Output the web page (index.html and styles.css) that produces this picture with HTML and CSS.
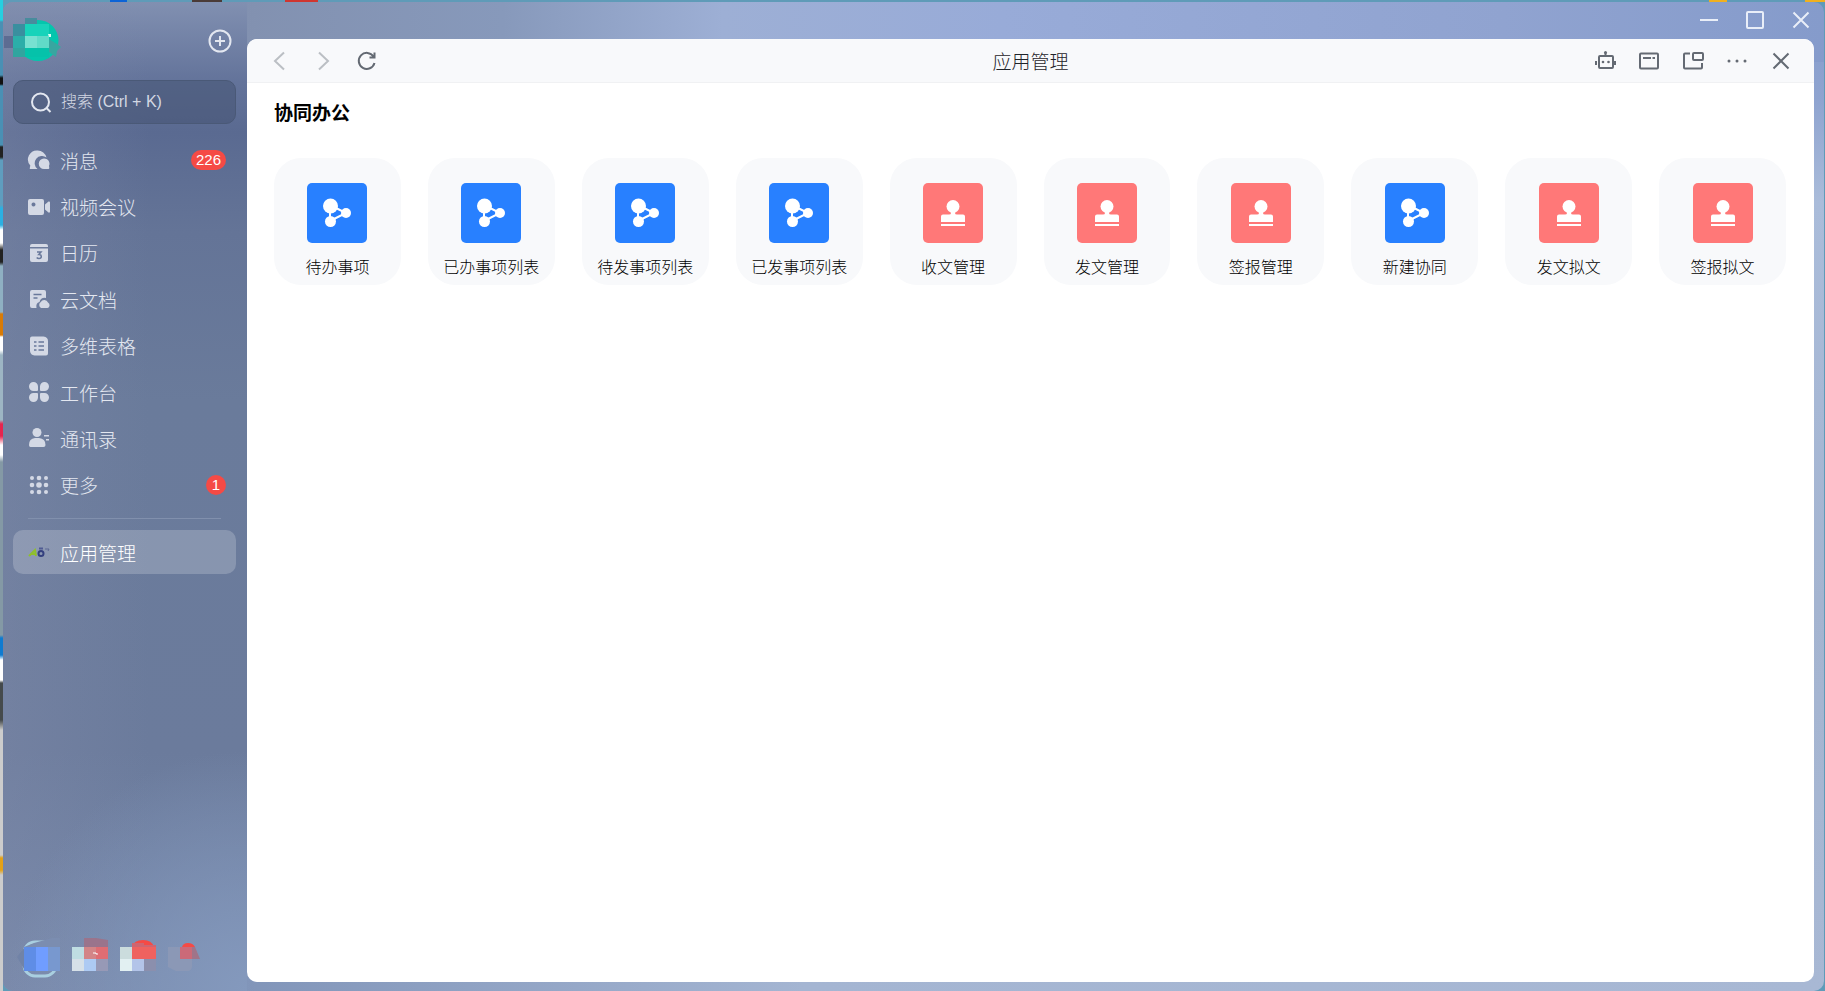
FILE: index.html
```
<!DOCTYPE html>
<html lang="zh-CN">
  <head>
    <meta charset="UTF-8" />
    <meta name="viewport" content="width=device-width, initial-scale=1.0" />
    <title>应用管理</title>
    <link rel="stylesheet" href="styles.css">
  </head>
  <body>
    <!-- Shared app icons -->
    <svg class="defs" width="0" height="0" aria-hidden="true">
      <symbol id="flow" viewBox="0 0 60 60">
        <path d="M23 22v16M23 22l16 8L23 38" fill="none" stroke="#fff" stroke-width="2" />
        <g fill="#fff">
          <circle cx="23.5" cy="23" r="7.5" />
          <circle cx="39" cy="30" r="5" />
          <circle cx="23.5" cy="38.5" r="5.5" />
        </g>
      </symbol>
      <symbol id="stamp" viewBox="0 0 60 60">
        <g fill="#fff">
          <circle cx="30" cy="23.5" r="6.5" />
          <path d="M28 27h4v3q0 1.5 2 1.5h6q2 0 2 2V39H18v-5.5q0-2 2-2h6q2 0 2-1.5zM18 41h24v2H18z" />
        </g>
      </symbol>
    </svg>

    <div class="window">
      <aside class="sidebar">
        <header class="profile">
          <svg class="avatar" viewBox="3 17 58 48" width="58" height="48" role="img" aria-label="头像">
            <circle cx="37" cy="40.5" r="20.5" fill="#04c6ad" />
            <path d="M24 18h12v6H24z" fill="#488c9d" />
            <path d="M3 36h9v12H3z" fill="#5d6c92" />
            <path d="M12 24h12v12H12z" fill="#3a8f9f" />
            <path d="M24 24h24v12H24z" fill="#18d3ba" />
            <path d="M12 36h12v12H12z" fill="#2caea9" />
            <path d="M24 36h12v12H24z" fill="#78e1d1" />
            <path d="M36 36h12v12H36z" fill="#61dac8" />
            <path d="M12 48h12v9H12z" fill="#31a59f" />
            <path d="M24 48h24v9H24z" fill="#05c2aa" />
            <path d="M48 48V39l8 5 4 3-4 4-1 6-7-5z" fill="#38a6a0" />
            <path d="M47 34h3v3h-2z" fill="#d9fff6" />
          </svg>
          <button class="icon-btn add" aria-label="新建">
            <svg viewBox="0 0 24 24" width="24" height="24"><circle cx="12" cy="12" r="10.5" /><path d="M12 7v10M7 12h10" /></svg>
          </button>
        </header>

        <label class="search">
          <svg viewBox="0 0 24 24" width="24" height="24"><circle cx="12.5" cy="12" r="8.5" /><path d="M18.5 18l4 4" /></svg>
          <input type="text" placeholder="搜索 (Ctrl + K)" aria-label="搜索" />
        </label>

        <nav class="menu">
          <a class="item" href="#">
            <svg viewBox="0 0 24 24" width="24" height="24"><path d="M10.5 2.5a9 9 0 0 1 9 7A7 7 0 0 0 10.5 21H3.500q-1 0-.7-1l.5-2.500a9 9 0 0 1 7.200-15z" /><path d="M17 10.5a5.300 5.300 0 0 1 5 7.500l.3 2q0 1-1 1H17a5.250 5.250 0 0 1 0-10.500z" /></svg>
            消息<span class="badge">226</span>
          </a>
          <a class="item" href="#">
            <svg viewBox="0 0 24 24" width="24" height="24"><path fill-rule="evenodd" d="M3 4h12q2 0 2 2v12q0 2-2 2H3q-2 0-2-2V6q0-2 2-2zm3.500 3.500a2 2 0 1 0 .01 0zM18 9.500l3.500-3q1.500-.5 1.500 1v9q0 1.500-1.500 1L18 14.500z" /></svg>
            视频会议
          </a>
          <a class="item" href="#">
            <svg viewBox="0 0 24 24" width="24" height="24"><path d="M5 3h14q2 0 2 2v1H3V5q0-2 2-2zM3 7.500h18V19q0 2-2 2H5q-2 0-2-2z" /><path class="cut" d="M10 11h4l-2.200 2.500q2.500 0 2.500 2T12 17.500q-1.500 0-2.300-1" /></svg>
            日历
          </a>
          <a class="item" href="#">
            <svg viewBox="0 0 24 24" width="24" height="24"><path d="M5 3h12q2 0 2 2v6q-5-1-6.500 4-4 1-3 6H5q-2 0-2-2V5q0-2 2-2z" /><path d="M14 21a3.500 3.500 0 0 1-.2-6 4 4 0 0 1 7.200.5 3 3 0 0 1-.5 5.500z" /><path class="cut" d="M6.500 7.500h8M6.500 11h4" /></svg>
            云文档
          </a>
          <a class="item" href="#">
            <svg viewBox="0 0 24 24" width="24" height="24"><path d="M5 2.500h11.500Q21 3 21 7v12.500q0 2-2 2H7.500q-4-.5-4.500-4.500V4.500q0-2 2-2z" /><path class="cut" d="M7 8h2.500M7 12h2.500M7 16h2.500M11.500 8H17M11.500 12H17M11.500 16H17" /></svg>
            多维表格
          </a>
          <a class="item" href="#">
            <svg viewBox="0 0 24 24" width="24" height="24"><path d="M6.500 2a4.500 4.500 0 0 1 4.500 4.500V10q0 1-1 1H6.500a4.500 4.500 0 0 1 0-9zM17.500 2a4.500 4.500 0 0 1 0 9H14q-1 0-1-1V6.500A4.500 4.500 0 0 1 17.500 2zM6.500 13H10q1 0 1 1v3.500A4.500 4.500 0 1 1 6.500 13zM14 13h3.500a4.500 4.500 0 1 1-4.500 4.500V14q0-1 1-1z" /></svg>
            工作台
          </a>
          <a class="item" href="#">
            <svg viewBox="0 0 24 24" width="24" height="24"><circle cx="10" cy="6.500" r="4.500" /><path d="M8 12h4q6.500.5 6.500 7 0 2-2 2h-13q-1.500 0-1.500-2Q2 12.500 8 12zM17 9h5v1.500h-5zM19 13h3v1.500h-3z" /></svg>
            通讯录
          </a>
          <a class="item" href="#">
            <svg viewBox="0 0 24 24" width="24" height="24"><circle cx="5" cy="5" r="2" /><circle cx="12" cy="5" r="2.300" /><circle cx="19" cy="5" r="2" /><circle cx="5" cy="12" r="2.300" /><circle cx="12" cy="12" r="2.800" /><circle cx="19" cy="12" r="2.300" /><circle cx="5" cy="19" r="2" /><circle cx="12" cy="19" r="2.300" /><circle cx="19" cy="19" r="2" /></svg>
            更多<span class="badge">1</span>
          </a>
        </nav>

        <hr class="divider" />

        <a class="item active" href="#">
          <svg viewBox="0 0 24 24" width="24" height="24">
            <g fill="none" stroke-width="2">
              <path d="M2 16l6-6 1 6M4 14h5" stroke="#8fbf2c" />
              <circle cx="14" cy="13.5" r="2.500" stroke="#34407f" />
              <path d="M12 8.500h4" stroke="#4f5b93" /><path d="M18 9h4l-1 2" stroke="#5c6894" stroke-width="1" />
            </g>
          </svg>
          应用管理
        </a>

        <!-- Account switcher -->
        <svg class="accounts" viewBox="17 936 190 44" width="190" height="44" role="img" aria-label="账号">
          <rect x="24" y="943" width="32" height="34" rx="11" fill="none" stroke="#a9cfe0" stroke-width="3" />
          <path d="M24 948l10-4 18-5h8v9H24z" fill="#7b8db0" />
          <path d="M17 958l7-9v21z" fill="#7183a7" />
          <path d="M24 948h12v24H24z" fill="#5f8de6" />
          <path d="M36 948h12v24H36z" fill="#709dff" />
          <path d="M48 948h12v24H48z" fill="#7898cf" />
          <path d="M84 939h12l12 2v7H84z" fill="#9a748c" />
          <path d="M72 948h12v12H72z" fill="#bfdde2" />
          <path d="M84 948h12v12H84z" fill="#d38587" />
          <path d="M96 948h12v12H96z" fill="#df6d73" />
          <path d="M72 960h12v12H72z" fill="#d6e0e8" />
          <path d="M84 960h12v12H84z" fill="#adcaf3" />
          <path d="M96 960h12v12H96z" fill="#9799b6" />
          <path d="M93 954h3v1h2" stroke="#fff" fill="none" />
          <path d="M132 948q2-7 11-7t11 7z" fill="#f54a45" />
          <path d="M132 944h12v4h-12zM144 946h12v2h-12z" fill="#cf6570" />
          <path d="M120 948h12v12h-12z" fill="#cbdcdd" />
          <path d="M132 948h24v12h-24z" fill="#ef625f" />
          <path d="M120 960h12v12h-12z" fill="#e2f0f2" />
          <path d="M132 960h12v12h-12z" fill="#b3c4e9" />
          <path d="M144 960h12v12h-12z" fill="#8b8fad" />
          <path d="M182 948q1-4 6-4t7 4z" fill="#f54a45" />
          <path d="M168 948h24v20q-1 4-4 4h-12l-8-4z" fill="#8b98b6" />
          <path d="M180 948h12v12h-12z" fill="#cb6a78" />
          <path d="M192 948h3l5 12h-8z" fill="#a07489" />
        </svg>
      </aside>

      <div class="main">
        <div class="titlebar">
          <button class="icon-btn" aria-label="最小化"><svg viewBox="0 0 24 24" width="24" height="24"><path d="M3 12h18" /></svg></button>
          <button class="icon-btn" aria-label="最大化"><svg viewBox="0 0 24 24" width="24" height="24"><rect x="4" y="4" width="16" height="16" rx="1" /></svg></button>
          <button class="icon-btn" aria-label="关闭窗口"><svg viewBox="0 0 24 24" width="24" height="24"><path d="M4.500 4.500l15 15M19.500 4.500l-15 15" /></svg></button>
        </div>

        <main class="panel">
          <header class="toolbar">
            <div class="tools">
              <button class="icon-btn muted" aria-label="后退"><svg viewBox="0 0 24 24" width="24" height="24"><path d="M16 3.500L7 12l9 8.500" /></svg></button>
              <button class="icon-btn muted" aria-label="前进"><svg viewBox="0 0 24 24" width="24" height="24"><path d="M7 3.500l9 8.500-9 8.500" /></svg></button>
              <button class="icon-btn" aria-label="刷新"><svg viewBox="0 0 24 24" width="24" height="24"><path d="M17.500 7.500A8 8 0 1 0 18.500 14M18.500 3.500v5h-5" /></svg></button>
            </div>
            <h1 class="title">应用管理</h1>
            <div class="tools end">
              <button class="icon-btn" aria-label="机器人"><svg viewBox="0 0 24 24" width="24" height="24"><path d="M12.500 4v4M3 12v4M22 12v4" /><rect x="6" y="7" width="14" height="12" rx="1" /><g class="dot"><circle cx="12.500" cy="3.500" r="1.500" /><circle cx="10" cy="13" r="1.300" /><circle cx="15.500" cy="13" r="1.300" /></g></svg></button>
              <button class="icon-btn" aria-label="窗口"><svg viewBox="0 0 24 24" width="24" height="24"><rect x="3" y="4.500" width="18" height="15" rx="1" /><path d="M6 9h8M15.500 9H18" /></svg></button>
              <button class="icon-btn" aria-label="独立窗口"><svg viewBox="0 0 24 24" width="24" height="24"><path d="M9 4.500H4q-1 0-1 1v13q0 1 1 1h16q1 0 1-1V14" /><rect x="12" y="4" width="10" height="7" rx="1" /></svg></button>
              <button class="icon-btn" aria-label="更多操作"><svg viewBox="0 0 24 24" width="24" height="24"><g class="dot"><circle cx="4" cy="12" r="1.500" /><circle cx="12" cy="12" r="1.500" /><circle cx="20" cy="12" r="1.500" /></g></svg></button>
              <button class="icon-btn" aria-label="关闭"><svg viewBox="0 0 24 24" width="24" height="24"><path d="M4.500 4.500l15 15M19.500 4.500l-15 15" /></svg></button>
            </div>
          </header>

          <section class="content">
            <h2 class="heading">协同办公</h2>
            <div class="apps">
              <a class="app" href="#"><svg class="tile blue"><use href="#flow" /></svg>待办事项</a>
              <a class="app" href="#"><svg class="tile blue"><use href="#flow" /></svg>已办事项列表</a>
              <a class="app" href="#"><svg class="tile blue"><use href="#flow" /></svg>待发事项列表</a>
              <a class="app" href="#"><svg class="tile blue"><use href="#flow" /></svg>已发事项列表</a>
              <a class="app" href="#"><svg class="tile red"><use href="#stamp" /></svg>收文管理</a>
              <a class="app" href="#"><svg class="tile red"><use href="#stamp" /></svg>发文管理</a>
              <a class="app" href="#"><svg class="tile red"><use href="#stamp" /></svg>签报管理</a>
              <a class="app" href="#"><svg class="tile blue"><use href="#flow" /></svg>新建协同</a>
              <a class="app" href="#"><svg class="tile red"><use href="#stamp" /></svg>发文拟文</a>
              <a class="app" href="#"><svg class="tile red"><use href="#stamp" /></svg>签报拟文</a>
            </div>
          </section>
        </main>
      </div>
    </div>
  </body>
</html>
```

FILE: styles.css
```
* {
  box-sizing: border-box;
}

body {
  margin: 0;
  min-height: 100vh;
  padding: 2px 1px 0 3px;
  display: flex;
  font-family: "Liberation Sans", "Noto Sans CJK SC", sans-serif;
  font-weight: 300;
  /* desktop showing round the window */
  background:
    linear-gradient(90deg, transparent 110px, #0c63d6 110px 127px, transparent 127px 192px, #4a3b38 192px 222px, transparent 222px 285px, #cf3630 285px 318px, transparent 318px 1709px, #f0b020 1709px 1727px, transparent 1727px 1805px, #f0b020 1805px) 0 0 / 100% 2px no-repeat,
    linear-gradient(#25cfe0 20px, #4a90b4 22px 75px, #111 78px 84px, #4a90b4 86px 145px, #222 147px 157px, #5f9dbe 160px 205px, #2bb0e2 208px 225px, #fff 230px 243px, #222 250px 262px, #8fb0c2 266px 312px, #d97b06 314px 335px, #fff 337px 350px, #9db5c3 355px 420px, #e6254e 424px 436px, #fff 445px 455px, #8499a5 462px 635px, #0f7bd0 638px 655px, #fff 660px 680px, #454a4c 683px 720px, #ccc 730px 855px, #e3a117 858px 870px, #ccc 875px) 0 0 / 3px 100% no-repeat,
    #5f9bb8;
}

h1,
h2 {
  margin: 0;
}

a {
  color: inherit;
  text-decoration: none;
}

.defs {
  position: absolute;
}

.window {
  flex: 1;
  display: flex;
  border-radius: 10px;
  overflow: hidden;
  background:
    linear-gradient(90deg, #8291b0 240px, #8799bb 500px, #9dafd5 720px, #98abd8 1000px, #90a3d0 1500px, #859bcb) 0 0 / 100% 60px no-repeat,
    linear-gradient(#859bcb, #8fa4d0 100px, #aabcda 200px, #a4b4d0 600px, #a8b8d4) 100% 0 / 12px 100% no-repeat,
    linear-gradient(90deg, #8195b9 240px, #a4b5d2 800px, #a8b8d4);
}

.sidebar {
  width: 244px;
  flex: none;
  display: flex;
  flex-direction: column;
  padding: 0 11px 12px 10px;
  color: #e3e7f0;
  background:
    radial-gradient(circle at 100% 100%, #8499bd, transparent 240px),
    linear-gradient(90deg, rgba(130, 140, 170, 0.35), transparent 60%),
    linear-gradient(#8190b1, #63739a 80px, #5a6a91 130px, #647497 230px, #6a7b9b 400px, #6b7b9c 750px, #7789ab);
}

.profile {
  height: 78px;
  display: flex;
  align-items: center;
  justify-content: space-between;
}

.avatar {
  margin-left: -9px;
}

.icon-btn {
  display: flex;
  align-items: center;
  justify-content: center;
  padding: 0;
  border: 0;
  background: none;
  color: inherit;
  cursor: pointer;
}

.icon-btn svg,
.search svg {
  flex: none;
  fill: none;
  stroke: currentColor;
  stroke-width: 1.5;
}

.icon-btn .dot {
  fill: currentColor;
  stroke: none;
}

.add {
  margin-right: 4px;
}

.add svg,
.search svg {
  stroke-width: 2;
}

.search {
  height: 44px;
  display: flex;
  align-items: center;
  gap: 9px;
  padding: 0 14px;
  border: 1px solid #4a5977;
  border-radius: 10px;
  background: rgba(70, 84, 115, 0.55);
}

.search input {
  width: 100%;
  min-width: 0;
  padding: 0;
  border: 0;
  outline: 0;
  background: none;
  color: inherit;
  font: inherit;
  font-size: 16px;
}

.search input::placeholder {
  color: #d3d8e3;
}

.menu {
  display: grid;
  grid-template-rows: repeat(8, 1fr);
  height: 371px;
  margin-top: 13px;
}

.item {
  display: flex;
  align-items: center;
  gap: 9px;
  padding: 0 10px 0 14px;
  font-size: 19px;
}

.item svg {
  flex: none;
  fill: #d4d9e5;
}

.item .cut {
  fill: none;
  stroke: #68789a;
  stroke-width: 1.5;
}

.badge {
  min-width: 20px;
  height: 20px;
  margin-left: auto;
  padding: 0 5px;
  border-radius: 10px;
  background: #f54a45;
  color: #fff;
  font-size: 15px;
  line-height: 20px;
  text-align: center;
}

.divider {
  width: 193px;
  height: 1px;
  margin: 10px 15px 11px;
  border: 0;
  background: #8190ad;
}

.active {
  height: 44px;
  border-radius: 10px;
  background: rgba(255, 255, 255, 0.2);
  color: #fff;
}

.accounts {
  margin-top: auto;
  margin-left: 4px;
}

.main {
  flex: 1;
  min-width: 0;
  display: flex;
  flex-direction: column;
  padding: 0 10px 9px 0;
}

.titlebar {
  height: 37px;
  display: flex;
  justify-content: flex-end;
  margin-right: -10px;
  color: #e9eef8;
}

.titlebar .icon-btn {
  width: 46px;
  height: 36px;
}

.titlebar svg {
  stroke-width: 2;
}

.panel {
  flex: 1;
  border-radius: 10px;
  overflow: hidden;
  background: #fff;
}

.toolbar {
  height: 44px;
  display: grid;
  grid-template-columns: 1fr auto 1fr;
  align-items: center;
  padding: 0 11px;
  border-bottom: 1px solid #f0f1f3;
  background: #f8f9fb;
  color: #646a73;
}

.tools {
  display: flex;
}

.tools .icon-btn {
  width: 44px;
  height: 43px;
}

.tools svg {
  stroke-width: 2;
}

.end {
  justify-content: flex-end;
}

.muted {
  color: #bbbfc4;
}

.title {
  color: #1f2329;
  font-size: 19px;
  font-weight: 300;
}

.content {
  padding: 17px 28px 28px 27px;
}

.heading {
  color: #000;
  font-size: 19px;
  line-height: 28px;
}

.apps {
  display: grid;
  grid-template-columns: repeat(10, 1fr);
  gap: 27px;
  margin-top: 30px;
}

.app {
  height: 127px;
  display: flex;
  flex-direction: column;
  align-items: center;
  gap: 13px;
  padding-top: 25px;
  border-radius: 27px;
  background: #f8f9fb;
  color: #000;
  font-size: 16px;
  line-height: 24px;
  white-space: nowrap;
}

.tile {
  width: 60px;
  height: 60px;
  border-radius: 5px;
}

.blue {
  background: #2880ff;
}

.red {
  background: #ff7878;
}
```
